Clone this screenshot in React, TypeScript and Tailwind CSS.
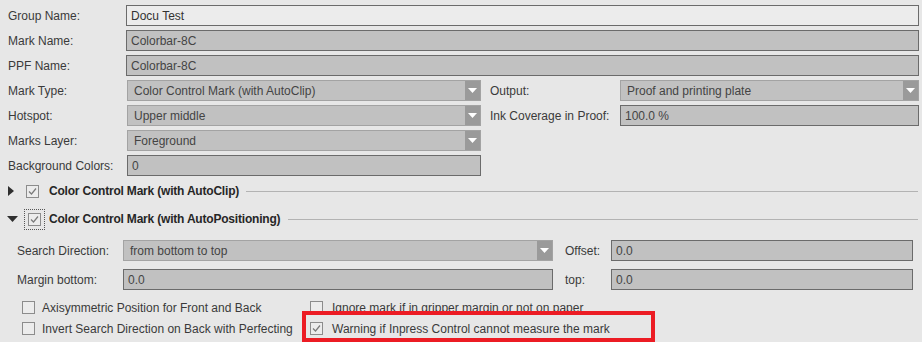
import React from "react";

const Arrow = () => (
  <div className="w-[15px] h-full bg-[#9a9a9a] flex items-center justify-center shrink-0">
    <svg width="9" height="5" viewBox="0 0 9 5">
      <path d="M0 0 L9 0 L4.5 5 Z" fill="#ffffff" />
    </svg>
  </div>
);

const Combo = ({ text, className = "" }: { text: string; className?: string }) => (
  <div className={`h-[21px] flex border border-[#a3a3a3] bg-[#c1c1c1] ${className}`}>
    <div className="flex-1 flex items-center pl-[6px] text-[#444] whitespace-nowrap overflow-hidden">{text}</div>
    <Arrow />
  </div>
);

const Field = ({ text, className = "", light = false }: { text: string; className?: string; light?: boolean }) => (
  <div
    className={`h-[21px] flex items-center pl-[4px] border border-[#6b6b6b] whitespace-nowrap overflow-hidden ${
      light ? "bg-[#ececec] text-[#333]" : "bg-[#c1c1c1] text-[#444]"
    } ${className}`}
  >
    {text}
  </div>
);

const Check = ({ checked }: { checked: boolean }) => (
  <svg width="13" height="13" viewBox="0 0 13 13" className="shrink-0">
    <rect x="0.5" y="0.5" width="12" height="12" fill="#ececec" stroke="#8c8c8c" />
    {checked && <path d="M3 6.5 L5.5 9 L10 3.5" fill="none" stroke="#7a7a7a" strokeWidth="1.2" />}
  </svg>
);

const Label = ({ text, className = "" }: { text: string; className?: string }) => (
  <div className={`text-[#3a3a3a] whitespace-nowrap shrink-0 ${className}`}>{text}</div>
);

export default function App() {
  return (
    <div
      className="relative w-[922px] h-[342px] overflow-hidden bg-[#e7e7e7] text-[12px] leading-none"
      style={{ fontFamily: '"Liberation Sans", Arial, sans-serif' }}
    >
      <div className="flex flex-col pt-[5px] pl-[8px] pr-[3px] gap-[4px]">
        <div className="flex items-center h-[21px]">
          <Label text="Group Name:" className="w-[118px]" />
          <Field text="Docu Test" light className="flex-1" />
        </div>
        <div className="flex items-center h-[21px]">
          <Label text="Mark Name:" className="w-[118px]" />
          <Field text="Colorbar-8C" className="flex-1" />
        </div>
        <div className="flex items-center h-[21px]">
          <Label text="PPF Name:" className="w-[118px]" />
          <Field text="Colorbar-8C" className="flex-1" />
        </div>
        <div className="flex items-center h-[21px]">
          <Label text="Mark Type:" className="w-[119px]" />
          <Combo text="Color Control Mark (with AutoClip)" className="w-[354px]" />
          <Label text="Output:" className="w-[130px] ml-[9px]" />
          <Combo text="Proof and printing plate" className="flex-1" />
        </div>
        <div className="flex items-center h-[21px]">
          <Label text="Hotspot:" className="w-[119px]" />
          <Combo text="Upper middle" className="w-[354px]" />
          <Label text="Ink Coverage in Proof:" className="w-[130px] ml-[9px]" />
          <Field text="100.0 %" className="flex-1" />
        </div>
        <div className="flex items-center h-[21px]">
          <Label text="Marks Layer:" className="w-[119px]" />
          <Combo text="Foreground" className="w-[354px]" />
        </div>
        <div className="flex items-center h-[21px]">
          <Label text="Background Colors:" className="w-[119px]" />
          <Field text="0" className="w-[354px]" />
        </div>
      </div>

      {/* Section header 1 */}
      <div className="flex items-center h-[20px] mt-[5px] pl-[8px] pr-[4px]">
        <svg width="6" height="10" viewBox="0 0 6 10" className="shrink-0">
          <path d="M0 0 L6 5 L0 10 Z" fill="#2f2f2f" />
        </svg>
        <div className="ml-[12px]">
          <Check checked />
        </div>
        <div className="ml-[10px] font-bold text-[#262626] whitespace-nowrap tracking-[-0.2px]">
          Color Control Mark (with AutoClip)
        </div>
        <div className="flex-1 h-px bg-[#b3b3b3] ml-[7px]" />
      </div>

      {/* Section header 2 */}
      <div className="flex items-center h-[20px] mt-[8px] pl-[7px] pr-[4px]">
        <svg width="11" height="6" viewBox="0 0 11 6" className="shrink-0">
          <path d="M0 0 L11 0 L5.5 6 Z" fill="#2f2f2f" />
        </svg>
        <div className="ml-[6px] p-[3px] border border-dotted border-[#555] flex">
          <Check checked />
        </div>
        <div className="ml-[4px] font-bold text-[#262626] whitespace-nowrap tracking-[-0.2px]">
          Color Control Mark (with AutoPositioning)
        </div>
        <div className="flex-1 h-px bg-[#b3b3b3] ml-[8px]" />
      </div>

      <div className="flex flex-col pl-[17px] pr-[9px] mt-[11px] gap-[8px]">
        <div className="flex items-center h-[21px]">
          <Label text="Search Direction:" className="w-[106px]" />
          <Combo text="from bottom to top" className="w-[430px]" />
          <Label text="Offset:" className="w-[46px] ml-[12px]" />
          <Field text="0.0" className="flex-1" />
        </div>
        <div className="flex items-center h-[21px]">
          <Label text="Margin bottom:" className="w-[106px]" />
          <Field text="0.0" className="w-[430px]" />
          <Label text="top:" className="w-[46px] ml-[12px]" />
          <Field text="0.0" className="flex-1" />
        </div>
      </div>

      <div className="flex flex-col mt-[7px] pl-[22px]">
        <div className="flex items-center h-[21px]">
          <div className="flex items-center w-[288px] gap-[7px]">
            <Check checked={false} />
            <span className="text-[#3a3a3a] whitespace-nowrap">Axisymmetric Position for Front and Back</span>
          </div>
          <div className="flex items-center gap-[9px]">
            <Check checked={false} />
            <span className="text-[#3a3a3a] whitespace-nowrap">Ignore mark if in gripper margin or not on paper</span>
          </div>
        </div>
        <div className="flex items-center h-[21px]">
          <div className="flex items-center w-[288px] gap-[7px]">
            <Check checked={false} />
            <span className="text-[#3a3a3a] whitespace-nowrap">Invert Search Direction on Back with Perfecting</span>
          </div>
          <div className="flex items-center gap-[9px]">
            <Check checked />
            <span className="text-[#3a3a3a] whitespace-nowrap">Warning if Inpress Control cannot measure the mark</span>
          </div>
        </div>
      </div>

      <div className="absolute left-[302px] top-[311px] w-[353px] h-[31px] border-4 border-[#ec1c24] pointer-events-none" />
    </div>
  );
}
